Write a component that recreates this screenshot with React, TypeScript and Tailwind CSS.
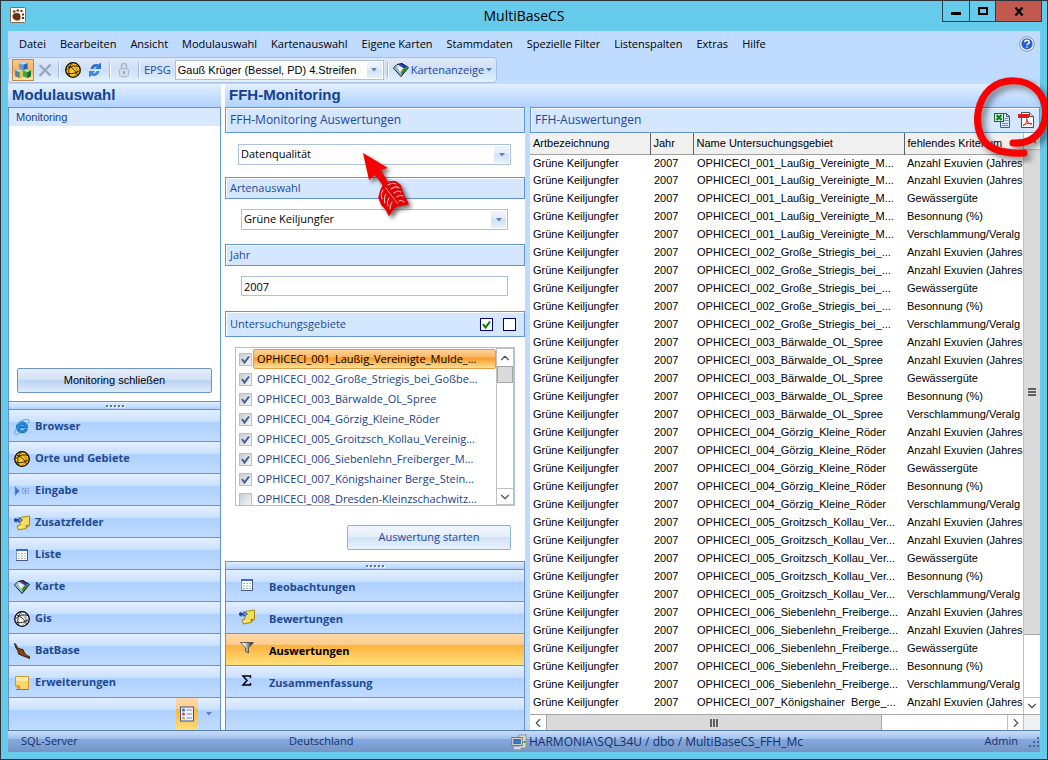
import { useState } from 'react';
import type { ReactNode } from 'react';
import { ChevronDown, ChevronLeft, ChevronRight, ChevronUp } from 'lucide-react';

const menu = ['Datei', 'Bearbeiten', 'Ansicht', 'Modulauswahl', 'Kartenauswahl', 'Eigene Karten', 'Stammdaten', 'Spezielle Filter', 'Listenspalten', 'Extras', 'Hilfe'];

const criteria = ['Anzahl Exuvien (Jahres', 'Anzahl Exuvien (Jahres', 'Gewässergüte', 'Besonnung (%)', 'Verschlammung/Veralg'];

const sites = [
  'OPHICECI_001_Laußig_Vereinigte_M...',
  'OPHICECI_002_Große_Striegis_bei_...',
  'OPHICECI_003_Bärwalde_OL_Spree',
  'OPHICECI_004_Görzig_Kleine_Röder',
  'OPHICECI_005_Groitzsch_Kollau_Ver...',
  'OPHICECI_006_Siebenlehn_Freiberge...',
];

const tableData = [
  ...sites.flatMap((site) => criteria.map((criterion) => ({ site, criterion }))),
  { site: 'OPHICECI_007_Königshainer  Berge_...', criterion: criteria[0] },
];

const areas = [
  { name: 'OPHICECI_001_Laußig_Vereinigte_Mulde_...', checked: true },
  { name: 'OPHICECI_002_Große_Striegis_bei_Goßbe...', checked: true },
  { name: 'OPHICECI_003_Bärwalde_OL_Spree', checked: true },
  { name: 'OPHICECI_004_Görzig_Kleine_Röder', checked: true },
  { name: 'OPHICECI_005_Groitzsch_Kollau_Vereinig...', checked: true },
  { name: 'OPHICECI_006_Siebenlehn_Freiberger_M...', checked: true },
  { name: 'OPHICECI_007_Königshainer Berge_Stein...', checked: true },
  { name: 'OPHICECI_008_Dresden-Kleinzschachwitz...', checked: false },
];

/* ---------- icons ---------- */

function Icon({ children, size = 16 }: { children: ReactNode; size?: number }) {
  return (
    <svg width={size} height={size} viewBox="0 0 16 16" fill="none" className="shrink-0" aria-hidden="true">
      {children}
    </svg>
  );
}

const PawIcon = () => (
  <Icon>
    <rect x=".5" y=".5" width="15" height="15" rx="1" fill="#fdfaf5" stroke="#8a6a4c" />
    <path d="M2.500 9.500C2.500 7 4.500 5.800 6.500 6c1 .2 2 0 3 .8 1.300 1.200 1 3.200 1 4.700-.5 2-3 2.500-5 1.700C3.500 12.500 2.500 11.500 2.500 9.500z" fill="#6b3410" />
    <path d="M3 3.500h2.500v2H3zM6.500 2.500H9v2H6.500zM10.500 3h2v2h-2zM12 6.500h2v2h-2zM12 10h2v2h-2z" fill="#6b3410" />
  </Icon>
);

const CubesIcon = () => (
  <Icon size={18}>
    <path d="M4.500 2l3.500-1.500L12 2v5L8.500 8.500l-4-1.500z" fill="#5c9fdc" />
    <path d="M4.500 2l3.500-1.500L12 2 8.500 3.300z" fill="#b8dcfa" />
    <path d="M8.500 3.300L12 2v5L8.500 8.500z" fill="#2a63ac" />
    <path d="M1 8.500L4 7l4 1.500v5L5 15l-4-1.500z" fill="#4684a0" />
    <path d="M1 8.500L4 7l4 1.500L5 10z" fill="#b5dce0" />
    <path d="M5 10l3-1.500v5L5 15z" fill="#f0c23a" />
    <path d="M8 8.500L11 7l4 1.500v5L12 15l-4-1.500z" fill="#3aa648" />
    <path d="M8 8.500L11 7l4 1.500L12 10z" fill="#a8e595" />
    <path d="M12 10l3-1.500v5L12 15z" fill="#1a6a2c" />
  </Icon>
);

const CrossIcon = () => (
  <Icon>
    <path d="M2.500 3l11 10.500M13.500 2.500L2.500 14" stroke="#96a5ba" strokeWidth="2.200" />
  </Icon>
);

const GlobeIcon = ({ fill, line }: { fill: string; line: string }) => (
  <Icon>
    <circle cx="8" cy="8" r="7.300" fill={fill} stroke="#000" strokeWidth="1.200" />
    <path d="M6 1.500c3 2 6.500 6 7.500 10.500M8.500 14.500c3.500-3.500 4.500-8 3-12" stroke={line} strokeWidth="1" />
    <path d="M2.500 4c4 1 8 4.500 10 9M1 8.500c3-4 8-5.500 13-4M1.500 11c4.500 1.500 9 .5 13-2.500M4.500 14C3 9.500 4 5 7 1" stroke="#1c1400" strokeWidth=".9" />
  </Icon>
);

const RefreshIcon = () => (
  <Icon>
    <path d="M1.500 7C2 3 6 1 9.500 2.500L12 .5V7H6l2-2.200C6.500 4.500 5 5.300 4.500 7z" fill="#2b74cf" transform="translate(2 0)" />
    <path d="M14.500 9c-.5 4-4.500 6-8 4.500L4 15.500V9h6l-2 2.200c1.500.3 3-.5 3.500-2.200z" fill="#3d8be0" transform="translate(-2 0)" />
  </Icon>
);

const LockIcon = () => (
  <Icon>
    <path d="M5.500 7V4a2.500 2.500 0 015 0v3" stroke="#a9b8cd" strokeWidth="1.600" />
    <path d="M3.500 8.500C3.500 7 5 6.500 8 6.500s4.500.5 4.500 2v4c0 1.500-1.500 2.500-4.500 2.500s-4.500-1-4.500-2.500z" fill="#d3dcea" stroke="#a9b7cc" />
    <path d="M8 9v3" stroke="#8697b0" strokeWidth="1.500" />
  </Icon>
);

const MapIcon = () => (
  <Icon>
    <path d="M.5 6L4 2.500l5-1 6.500 4L8 14.500z" fill="#cfe6ef" />
    <path d="M1.500 6l3.500-2.500L8 9v4.500z" fill="#8fb9c9" />
    <path d="M5 2.500L9 1.500l5.500 3.500L11 6.500z" fill="#1c39d4" />
    <path d="M15 5.500L8.500 13.800 8 10l3-4z" fill="#1f9a2b" />
    <path d="M4 4.500l5 1.500-2 4z" fill="#fff" />
    <path d="M7.500 3H9v1.500H7.500zM9.500 7.500H11V9H9.500z" fill="#e5281c" />
    <path d="M.5 6L4 2.500l5-1 6.500 4L8 14.500z" stroke="#111" />
  </Icon>
);

const HelpIcon = () => (
  <Icon>
    <circle cx="8" cy="8" r="7.300" fill="#f3f6fb" stroke="#8793ab" />
    <circle cx="8" cy="7.800" r="5.600" fill="#2563d0" />
    <path d="M5.800 6.300C5.800 3.600 10.200 3.700 10.200 6.200 10.200 7.800 8 7.700 8 9.300M8 10.400v1.400" stroke="#fff" strokeWidth="1.500" />
  </Icon>
);

const ExcelIcon = () => (
  <Icon>
    <path d="M6.500 1.500h6l3 3v11h-9z" fill="#dbe9fb" stroke="#3b5b8c" />
    <path d="M12.500 1.500v3h3" stroke="#3b5b8c" />
    <path d="M10.500 6.500h4M10.500 8.500h4M8 11.500h6M8 13.500h6" stroke="#6d90c4" />
    <rect x=".5" y="1.500" width="9" height="8" fill="#e6fbe2" stroke="#0a6b1c" />
    <path d="M2.500 3l5 5M7.500 3l-5 5" stroke="#0b7d22" strokeWidth="2.200" />
  </Icon>
);

const PdfIcon = () => (
  <Icon>
    <path d="M3.500.5h8l4 4v11h-12z" fill="#fdfdfd" stroke="#4d4d4d" />
    <path d="M11.500.5v4h4" fill="#d8d8d8" stroke="#4d4d4d" />
    <rect y="2" width="11" height="4" fill="#e01b1b" />
    <path d="M5 13.500C8 12 9.500 9 9 7c-.3-1-.8 0 0 1.500 1 2.500 3 4 5 3.500-2-1.500-6-.5-9 1.500z" stroke="#d8201c" strokeWidth="1" />
  </Icon>
);

const BrowserIcon = () => (
  <Icon>
    <path d="M13.500 9H5.200c.2 3 4 3.600 5.300 1.600h2.800c-2 5-10.800 4.200-10.800-2.300 0-7 11.500-7.600 11 .7zM5.300 7h5.200c-.2-2.400-4.700-2.500-5.200 0z" fill="#2690dc" stroke="#1768b4" strokeWidth="1" />
    <path d="M4 4.500C9-.5 15-.5 15 2c0 .8-.3 1.500-.7 2.300M2.800 9C.5 12 0 14.800 1.500 15.300c1 .4 2.800-.4 4.500-1.700" stroke="#62aee4" strokeWidth="1.100" />
  </Icon>
);

const InputIcon = () => (
  <Icon>
    <path d="M1 3.500L5.500 8 1 12.500z" fill="#3a6fd0" stroke="#6d97de" strokeWidth=".6" />
    <rect x="8.500" y="5.500" width="6" height="5" stroke="#6f90cc" strokeDasharray="1.500 1" />
    <path d="M10 8h3M11.500 6.500v3" stroke="#6f90cc" />
  </Icon>
);

const FieldsIcon = () => (
  <Icon>
    <path d="M6.500 2.500L15.500 1v9l-3.500 3.500L4.500 15 3 11l3-1z" fill="#f4dc5c" stroke="#a78616" />
    <path d="M15.500 9.500l-4 .7.500 3.300z" fill="#a98416" />
    <path d="M4.500 12.500l6-1" stroke="#fdf3a6" />
    <path d="M0 4l2.500-1.500V4h2V2L9 5 4.500 8V6.500h-2V8L0 6z" fill="#2347a5" />
    <circle cx="6" cy="5" r="1.200" fill="#7aa0e6" />
  </Icon>
);

const GridIcon = () => (
  <Icon>
    <rect x="2.500" y="2.500" width="11" height="11" fill="#fff" stroke="#7f9bcb" />
    <path d="M2 3h12" stroke="#3e68c2" strokeWidth="2" />
    <path d="M13.500 3v10.500H2" stroke="#44597f" strokeWidth="1" />
    <path d="M4 6.500h2M7 6.500h2M10 6.500h2M4 9h2M7 9h2M10 9h2M4 11.500h2M7 11.500h2M10 11.500h2" stroke="#a6b8d4" strokeWidth="1.200" />
  </Icon>
);

const BatIcon = () => (
  <Icon>
    <path d="M.5.500L2 1.500 3.500 5l3 1 2.500.5 1.500 3.500 2.500 2.500 2.500 1v2L12 14l-4-1.500-3.500-1.500-.5-3L2 5z" fill="#8a430c" stroke="#2c1402" strokeWidth=".9" />
  </Icon>
);

const NoteIcon = () => (
  <Icon>
    <path d="M1.500 1.500h13v13h-9l-4-3.500z" fill="#fbd667" stroke="#c79a35" />
    <path d="M2 2h12v4H2z" fill="#feeaa2" />
    <path d="M1.500 10.500c2-.5 4-.5 4.500 1s0 2.500.5 3z" fill="#d39b21" />
    <path d="M2 14.500h12.500" stroke="#9d7a2d" />
  </Icon>
);

const OptionsIcon = () => (
  <Icon>
    <rect x="1.500" y="1" width="13" height="14" fill="#eaf2ff" stroke="#38547f" />
    <path d="M7.500 4H13M7.500 8H13M7.500 12H13" stroke="#7c8ba7" strokeWidth="1.200" />
    <circle cx="4.500" cy="4" r="1.500" fill="#4c51d8" />
    <circle cx="4.500" cy="8" r="1.500" fill="#e04427" />
    <circle cx="4.500" cy="12" r="1.500" fill="#e4ab28" />
  </Icon>
);

const FilterIcon = () => (
  <Icon>
    <defs>
      <linearGradient id="funnel">
        <stop offset=".25" stopColor="#fff" />
        <stop offset=".85" stopColor="#333" />
      </linearGradient>
    </defs>
    <path d="M1.500 1.500h13L9.500 7v5L6.500 10.500V7z" fill="url(#funnel)" stroke="#55524e" strokeWidth=".9" />
  </Icon>
);

const SigmaIcon = () => (
  <Icon>
    <path d="M11.500 5V3H4l4 4.500L4 12h7.500v-2" stroke="#000" strokeWidth="1.500" />
  </Icon>
);

const NetworkIcon = () => (
  <Icon>
    <path d="M8 1h7v13H8z" fill="#d9d8cf" stroke="#8a8a80" strokeWidth=".8" />
    <path d="M12.500 7h2v2h-2z" fill="#37a63c" />
    <rect x=".8" y="3.500" width="10.500" height="8" fill="#e8e6dc" stroke="#77776e" />
    <rect x="2.800" y="5.300" width="6.500" height="4.500" fill="#3d78cf" stroke="#1f4f95" strokeWidth=".7" />
    <path d="M3 14h6.500" stroke="#dddcd2" strokeWidth="2.500" />
  </Icon>
);

const Triangle = () => (
  <svg width="6" height="4" viewBox="0 0 6 4" aria-hidden="true">
    <path d="M0 0h6L3 3.500z" fill="#5b83bd" />
  </svg>
);

/* ---------- building blocks ---------- */

const navFill = 'bg-[linear-gradient(180deg,#e3efff_0%,#c9e0ff_38%,#aed0ff_39%,#c0dcff_100%)]';
const orangeFill = 'bg-[linear-gradient(180deg,#ffd9aa_0%,#ffcb8a_35%,#ffb13c_36%,#ffe07c_100%)]';
const titleFill = 'bg-[linear-gradient(180deg,#e3efff,#afd2ff)]';

function Grip() {
  return (
    <div className={`h-2 border-t border-[#6593cf] flex items-center justify-center gap-[2px] ${titleFill}`}>
      {[0, 1, 2, 3, 4].map((dot) => (
        <span key={dot} className="w-[2px] h-[2px] bg-[#5478ad] shadow-[1px_1px_0_#fff]" />
      ))}
    </div>
  );
}

function Combo({ id, label, value, className = '' }: { id: string; label: string; value: string; className?: string }) {
  return (
    <div className={`relative border border-[#abc1de] bg-white ${className}`}>
      <select id={id} aria-label={label} className="block w-full h-full appearance-none bg-transparent pl-[2px] pr-4 text-[11px] text-black outline-none">
        <option>{value}</option>
      </select>
      <span className="pointer-events-none absolute inset-y-px right-px w-[15px] flex items-center justify-center bg-[linear-gradient(180deg,#eef4fc_0%,#e2ecf9_49%,#d0e1f5_50%,#e6f0fb_100%)]">
        <Triangle />
      </span>
    </div>
  );
}

function Caption({ children, className = '' }: { children: ReactNode; className?: string }) {
  return (
    <div className={`flex items-center border border-[#6593cf] bg-[#d5e7ff] px-1 text-[#1c4a99] shadow-[inset_1px_1px_0_#fff] ${className}`}>
      {children}
    </div>
  );
}

function CheckBox({ id, label, defaultChecked, strong = false }: { id: string; label: string; defaultChecked: boolean; strong?: boolean }) {
  return (
    <span className="grid shrink-0">
      <input
        id={id}
        aria-label={label}
        type="checkbox"
        defaultChecked={defaultChecked}
        className={`peer col-start-1 row-start-1 w-[13px] h-[13px] appearance-none border ${strong ? 'border-[#000080] bg-white' : 'border-[#abc1de] bg-[linear-gradient(135deg,#c8ccd3,#f6f6f6)]'}`}
      />
      <svg viewBox="0 0 13 13" className="pointer-events-none invisible peer-checked:visible col-start-1 row-start-1 w-[13px] h-[13px]" fill="none" aria-hidden="true">
        <path d="M3 6l2.500 3.500L10 3.500" stroke={strong ? '#008000' : '#3f5f93'} strokeWidth="2" />
      </svg>
    </span>
  );
}

const modules = [
  { label: 'Browser', icon: <BrowserIcon /> },
  { label: 'Orte und Gebiete', icon: <GlobeIcon fill="#ffc51a" line="#d98500" /> },
  { label: 'Eingabe', icon: <InputIcon /> },
  { label: 'Zusatzfelder', icon: <FieldsIcon /> },
  { label: 'Liste', icon: <GridIcon /> },
  { label: 'Karte', icon: <MapIcon /> },
  { label: 'Gis', icon: <GlobeIcon fill="#eef0fa" line="#8f93b8" /> },
  { label: 'BatBase', icon: <BatIcon /> },
  { label: 'Erweiterungen', icon: <NoteIcon /> },
];

const views = [
  { label: 'Beobachtungen', icon: <GridIcon /> },
  { label: 'Bewertungen', icon: <FieldsIcon /> },
  { label: 'Auswertungen', icon: <FilterIcon /> },
  { label: 'Zusammenfassung', icon: <SigmaIcon /> },
];

const Separator = () => <span className="w-px h-4 bg-[#9dbde8] shadow-[1px_0_0_#fff]" />;

function Toolbar() {
  return (
    <div className="self-start h-[26px] flex items-center rounded-[4px] border border-[#a3bfe4] bg-[linear-gradient(180deg,#dfe8f6_0%,#cddff8_50%,#e2f3fb_100%)] pl-[3px] pr-1">
      <button aria-label="Module" className="w-[22px] h-[22px] flex items-center justify-center border border-[#b58b50] bg-[linear-gradient(180deg,#f9c78c,#fdb05c_50%,#ffe3a8)]">
        <CubesIcon />
      </button>
      <button aria-label="Schließen" className="ml-[3px]"><CrossIcon /></button>
      <span className="w-[5px]" />
      <Separator />
      <button aria-label="Orte" className="ml-[6px]"><GlobeIcon fill="#ffc51a" line="#d98500" /></button>
      <button aria-label="Aktualisieren" className="mx-[6px]"><RefreshIcon /></button>
      <Separator />
      <button aria-label="Sperren" className="mx-[6px]"><LockIcon /></button>
      <Separator />
      <label htmlFor="epsg" className="ml-[5px] mr-1 text-[#1c4a99]">EPSG</label>
      <Combo id="epsg" label="EPSG" value="Gauß Krüger (Bessel, PD) 4.Streifen" className="w-[209px] h-5 font-['Liberation_Sans',sans-serif]" />
      <span className="w-[3px]" />
      <Separator />
      <button className="ml-[5px] flex items-center gap-[2px] text-[#1c4a99]">
        <MapIcon />
        Kartenanzeige
        <Triangle />
      </button>
    </div>
  );
}

function ModulePanel() {
  return (
    <aside className="w-[213px] shrink-0 flex flex-col">
      <h2 className={`h-[23px] px-1 leading-[22px] text-[15px] font-bold text-[#15428b] font-['Liberation_Sans',sans-serif] ${titleFill}`}>Modulauswahl</h2>
      <div className="flex-1 flex flex-col border-x border-t border-[#6593cf] bg-white">
        <a href="#monitoring" className="h-[18px] pl-[7px] leading-[18px] bg-[#d8e8ff] text-[#15428b] font-['Liberation_Sans',sans-serif]">Monitoring</a>
        <div className="flex-1" />
        <button className="mx-2 mb-2 h-[25px] rounded-[2px] border border-[#6f95c4] bg-[linear-gradient(180deg,#e6eefa_0%,#d3e2f6_45%,#bcd3f1_50%,#dcebfa_100%)] text-black font-['Liberation_Sans',sans-serif]">
          Monitoring schließen
        </button>
        <Grip />
        <nav>
          {modules.map((item) => (
            <button key={item.label} className={`w-full h-8 flex items-center gap-[5px] border-t border-[#6593cf] pt-[2px] pl-[5px] font-bold text-[#1f4a8c] ${navFill}`}>
              {item.icon}
              {item.label}
            </button>
          ))}
        </nav>
        <div className={`h-[33px] flex items-stretch justify-end border-t border-[#6593cf] ${navFill}`}>
          <button aria-label="Ansichten" className={`w-[22px] flex items-center justify-center ${orangeFill}`}><OptionsIcon /></button>
          <button aria-label="Mehr" className="w-[22px] flex items-center justify-center"><Triangle /></button>
        </div>
      </div>
    </aside>
  );
}

function Arrow() {
  return (
    <svg width="60" height="76" viewBox="0 0 60 76" className="pointer-events-none absolute left-[132px] top-[42px]" fill="none" aria-hidden="true">
      <g className="drop-shadow-[3px_3px_2px_rgba(0,0,0,0.55)]">
        <path d="M6 4l25 15-7 2 8 14-5 3-9-12-6 5z" fill="#f40000" />
        <path d="M27 35c4-2 9-3 12-2l4 3 2 6 2 5 4 8-11 2-4 3-4 6-3-6-4-4-3-7 2-8z" fill="#e60000" stroke="#e60000" strokeWidth="1.500" strokeLinejoin="round" />
        <path d="M31 36c3-2 6-2 8-1M34 40c3-2 6-3 8-1M37 44c2-2 5-2 7-1M40 48c2-2 4-2 6-1M42 52c2-1 3-1 5 1M26 41c-2 3-2 6-1 9M29 45c-2 3-2 6-1 9M32 49c-2 3-2 5-1 8M35 53c-2 3-2 4-2 7" stroke="#cdbcbc" strokeWidth="1.100" strokeLinecap="round" />
        <path d="M28 38l13 17" stroke="#d8c4c4" strokeWidth=".8" />
      </g>
    </svg>
  );
}

function EvaluationPanel() {
  const [view, setView] = useState('Auswertungen');

  return (
    <section className="relative w-[300px] shrink-0 flex flex-col bg-white">
      <Caption className="h-[26px] text-[12px]">FFH-Monitoring Auswertungen</Caption>
      <Combo id="kind" label="FFH-Monitoring Auswertungen" value="Datenqualität" className="ml-[13px] mr-[14px] mt-[11px] h-[21px]" />
      <Caption className="mt-3 h-[22px]"><label htmlFor="species">Artenauswahl</label></Caption>
      <Combo id="species" label="Artenauswahl" value="Grüne Keiljungfer" className="ml-4 mr-[17px] mt-[10px] h-[21px]" />
      <Caption className="mt-[14px] h-[22px]"><label htmlFor="year">Jahr</label></Caption>
      <input id="year" defaultValue="2007" className="ml-4 mr-[17px] mt-[10px] h-5 border border-[#abc1de] pl-[2px] text-black outline-none" />
      <Caption className="mt-[15px] h-[26px]">
        <span className="flex-1">Untersuchungsgebiete</span>
        <span className="flex gap-[10px] pr-1">
          <CheckBox id="all" label="Alle auswählen" defaultChecked strong />
          <CheckBox id="none" label="Keine auswählen" defaultChecked={false} strong />
        </span>
      </Caption>

      <div className="mx-[10px] mt-[10px] h-[159px] flex border border-[#abc1de]">
        <ul className="flex-1 overflow-hidden pt-px pl-[3px] text-[#15428b]">
          {areas.map((area, idx) => (
            <li key={area.name} className="h-5 flex items-center">
              <CheckBox id={`area-${idx}`} label={area.name} defaultChecked={area.checked} />
              <label
                htmlFor={`area-${idx}`}
                className={`ml-[1px] flex-1 rounded-[2px] border pl-[3px] leading-[18px] whitespace-nowrap ${
                  idx === 0 ? 'border-[#dfa148] bg-[linear-gradient(180deg,#fdd29b_0%,#fbb65e_40%,#f99a2b_45%,#ffe096_100%)] text-black' : 'border-transparent'
                }`}
              >
                {area.name}
              </label>
            </li>
          ))}
        </ul>
        <div className="w-[18px] flex flex-col border border-[#c0c0c0] text-[#505050]">
          <button aria-label="Nach oben" className="h-[17px] flex items-center justify-center"><ChevronUp size={14} /></button>
          <span className="h-[17px] border border-[#a6a6a6] bg-[#dadada]" />
          <span className="flex-1" />
          <button aria-label="Nach unten" className="h-4 flex items-center justify-center border-t border-[#c0c0c0]"><ChevronDown size={14} /></button>
        </div>
      </div>

      <button className="self-end mr-[14px] mt-[19px] w-[164px] h-[25px] rounded-[2px] border border-[#8fb0d9] bg-[linear-gradient(180deg,#f2f7fd_0%,#e3eefa_45%,#d0e2f6_50%,#e8f3fd_100%)] text-[#1c4a99] text-[11px]">
        Auswertung starten
      </button>

      <div className="flex-1" />
      <div className="border-x border-[#6593cf]">
        <Grip />
        <nav>
          {views.map((item) => (
            <button
              key={item.label}
              onClick={() => setView(item.label)}
              className={`w-full h-8 flex items-start gap-[14px] border-t border-[#6593cf] pt-[7px] pl-[13px] font-bold leading-5 ${
                item.label === view ? `text-black ${orangeFill}` : `text-[#1f4a8c] ${navFill}`
              }`}
            >
              {item.icon}
              {item.label}
            </button>
          ))}
        </nav>
        <div className={`h-[33px] border-t border-[#6593cf] ${navFill}`} />
      </div>
      <Arrow />
    </section>
  );
}

function ResultPanel() {
  return (
    <section className="min-w-0 flex-1 flex flex-col bg-white">
      <Caption className="h-[26px] justify-between text-[12px]">
        FFH-Auswertungen
        <span className="flex gap-2 pr-px">
          <button aria-label="Excel-Export"><ExcelIcon /></button>
          <button aria-label="PDF-Export"><PdfIcon /></button>
        </span>
      </Caption>
      <div className="flex flex-1 font-['Liberation_Sans',sans-serif] text-black">
        <div className="min-w-0 flex-1">
          <table className="w-full table-fixed text-left">
            <colgroup>
              <col className="w-[120px]" />
              <col className="w-[43px]" />
              <col className="w-[211px]" />
              <col />
            </colgroup>
            <thead>
              <tr className="h-[21px] bg-[#f0f0f0] border-b border-[#a0a0a0]">
                {['Artbezeichnung', 'Jahr', 'Name Untersuchungsgebiet', 'fehlendes Kriterium'].map((title) => (
                  <th key={title} className="border-r border-[#606060] last:border-r-0 pl-[3px] font-normal whitespace-nowrap">{title}</th>
                ))}
              </tr>
            </thead>
            <tbody>
              {tableData.map((row, idx) => (
                <tr key={idx} className="h-[18px] align-top leading-4">
                  <td className="pl-[3px]">Grüne Keiljungfer</td>
                  <td className="pl-1">2007</td>
                  <td className="pl-1 whitespace-pre">{row.site}</td>
                  <td className="pl-[3px] whitespace-nowrap">{row.criterion}</td>
                </tr>
              ))}
            </tbody>
          </table>
        </div>
        <div className="w-[17px] flex flex-col border-l border-[#c0c0c0] text-[#505050]">
          <button aria-label="Nach oben" className="h-[17px] flex items-center justify-center border-b border-[#c0c0c0]"><ChevronUp size={14} /></button>
          <div className="flex-[486] flex flex-col items-center justify-center gap-[1px] bg-[#dadada] border-b border-[#a6a6a6]">
            <span className="w-2 h-[2px] bg-[#606060]" />
            <span className="w-2 h-[2px] bg-[#606060]" />
            <span className="w-2 h-[2px] bg-[#606060]" />
          </div>
          <div className="flex-[62]" />
          <button aria-label="Nach unten" className="h-[17px] flex items-center justify-center border-t border-[#c0c0c0]"><ChevronDown size={14} /></button>
        </div>
      </div>
      <div className="h-4 flex border-t border-[#a6a6a6] text-[#505050]">
        <button aria-label="Nach links" className="w-[17px] flex items-center justify-center border-r border-[#a6a6a6]"><ChevronLeft size={14} /></button>
        <div className="flex-[334] flex items-center justify-center gap-[1px] bg-[#dadada] border-r border-[#a6a6a6]">
          <span className="w-[2px] h-2 bg-[#606060]" />
          <span className="w-[2px] h-2 bg-[#606060]" />
          <span className="w-[2px] h-2 bg-[#606060]" />
        </div>
        <div className="flex-[125]" />
        <button aria-label="Nach rechts" className="w-[17px] flex items-center justify-center border-x border-[#c0c0c0]"><ChevronRight size={14} /></button>
        <span className="w-4 bg-[#f0f0f0]" />
      </div>
    </section>
  );
}

export default function App() {
  return (
    <div className="relative min-h-screen flex flex-col overflow-hidden border border-[#2f3238] bg-[#66caea] font-['Open_Sans',sans-serif] text-[11px]">
      <header className="h-[30px] grid grid-cols-[1fr_auto_1fr] items-start">
        <span className="pl-[9px] pt-[6px]"><PawIcon /></span>
        <h1 className="text-[14px] leading-[29px] text-black">MultiBaseCS</h1>
        <div className="justify-self-end mr-[5px] h-[21px] flex border-x border-b border-[#263f4a]">
          <button aria-label="Minimieren" className="w-[27px] flex items-center justify-center border-r border-[#263f4a]">
            <span className="mt-1 w-[10px] h-[3px] bg-black" />
          </button>
          <button aria-label="Maximieren" className="w-[26px] flex items-center justify-center border-r border-[#263f4a]">
            <span className="w-[10px] h-2 border-2 border-black" />
          </button>
          <button aria-label="Schließen" className="w-[45px] flex items-center justify-center bg-[#c1594f]">
            <svg width="10" height="9" viewBox="0 0 10 9" aria-hidden="true"><path d="M1.500 0.500l7 8M8.500 0.500l-7 8" stroke="#000" strokeWidth="2.200" /></svg>
          </button>
        </div>
      </header>

      <div className="flex-1 mx-[7px] flex flex-col bg-[#bfdbff]">
        <nav className="h-[26px] flex items-center pl-1 pr-[5px] text-black">
          {menu.map((item) => (
            <button key={item} className="px-[7px] whitespace-nowrap">{item}</button>
          ))}
          <button aria-label="Hilfe" className="ml-auto"><HelpIcon /></button>
        </nav>
        <Toolbar />
        <main className="mt-px flex-1 flex">
          <ModulePanel />
          <div className="min-w-0 flex-1 flex flex-col pl-1 bg-white">
            <h2 className={`h-[23px] px-1 leading-[22px] text-[15px] font-bold text-[#15428b] font-['Liberation_Sans',sans-serif] ${titleFill}`}>FFH-Monitoring</h2>
            <div className="flex-1 flex gap-[5px] bg-[#bfdbff]">
              <EvaluationPanel />
              <ResultPanel />
            </div>
          </div>
        </main>
        <footer className="h-[22px] grid grid-cols-[268px_222px_1fr_auto] items-center border-t border-[#567db0] bg-[linear-gradient(180deg,#c9ddf8_0%,#a5c3ee_35%,#84a9e0_40%,#7695c4_100%)] pl-[13px] text-[#15306b]">
          <span>SQL-Server</span>
          <span>Deutschland</span>
          <span className="flex items-center gap-[2px] text-[12px]"><NetworkIcon />HARMONIA\SQL34U / dbo / MultiBaseCS_FFH_Mc</span>
          <span className="flex items-center gap-[10px]">
            Admin
            <svg width="12" height="12" viewBox="0 0 12 12" fill="#46669c" aria-hidden="true">
              <path d="M9 1h2v2H9zM5 5h2v2H5zM9 5h2v2H9zM1 9h2v2H1zM5 9h2v2H5zM9 9h2v2H9z" />
            </svg>
          </span>
        </footer>
      </div>
      <div className="h-[7px]" />

      {/* hand-drawn marker around the export buttons */}
      <svg width="82" height="94" viewBox="966 70 82 94" fill="none" className="pointer-events-none absolute -right-px top-[69px]" aria-hidden="true">
        <path
          className="drop-shadow-[4px_4px_3px_rgba(0,0,0,0.45)]"
          d="M1013 143C1026 144 1035 139 1041 130C1048 117 1047 101 1037 90C1025 78 1003 78 990 89C978 100 974 120 981 136C987 149 1003 154 1024 153"
          stroke="#fb0000"
          strokeWidth="7"
          strokeLinecap="round"
        />
      </svg>
    </div>
  );
}
